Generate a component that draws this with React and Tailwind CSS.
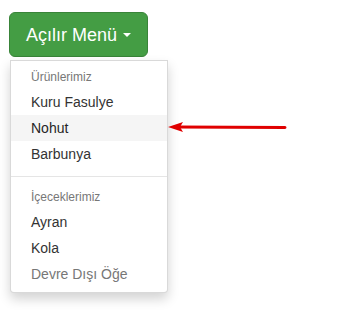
export default function App() {
  const font = { fontFamily: '"Liberation Sans", Arial, sans-serif' }
  return (
    <div className="relative w-[359px] h-[310px] bg-white" style={font}>
      <div className="pt-3 pl-[9px] flex flex-col items-start">
        <button className="flex items-center h-[45px] px-4 rounded-md bg-[#449d44] border border-[#398439] text-white text-lg leading-none">
          Açılır Menü
          <span className="ml-[6px] w-0 h-0 border-x-[4px] border-x-transparent border-t-[4px] border-t-white" />
        </button>
        <ul className="mt-[3px] ml-px w-[158px] py-[5px] bg-white border border-black/15 rounded-b shadow-[0_6px_12px_rgba(0,0,0,0.175)] text-sm">
          <li className="px-5 py-[3px] text-xs leading-[17px] text-[#777]">Ürünlerimiz</li>
          <li className="px-5 py-[3px] leading-[20px] text-[#333]">Kuru Fasulye</li>
          <li className="px-5 py-[3px] leading-[20px] text-[#262626] bg-[#f5f5f5]">Nohut</li>
          <li className="px-5 py-[3px] leading-[20px] text-[#333]">Barbunya</li>
          <li className="my-[9px] h-px bg-[#e5e5e5]" />
          <li className="px-5 py-[3px] text-xs leading-[17px] text-[#777]">İçeceklerimiz</li>
          <li className="px-5 py-[3px] leading-[20px] text-[#333]">Ayran</li>
          <li className="px-5 py-[3px] leading-[20px] text-[#333]">Kola</li>
          <li className="px-5 py-[3px] leading-[20px] text-[#777]">Devre Dışı Öğe</li>
        </ul>
      </div>
      <svg className="absolute left-[168px] top-[120px]" width="120" height="14" viewBox="0 0 120 14">
        <line x1="10" y1="7" x2="117" y2="7.5" stroke="#e00000" strokeWidth="3" strokeLinecap="round" />
        <polygon points="0,7 15,2 12,7 15,12" fill="#e00000" />
      </svg>
    </div>
  )
}
